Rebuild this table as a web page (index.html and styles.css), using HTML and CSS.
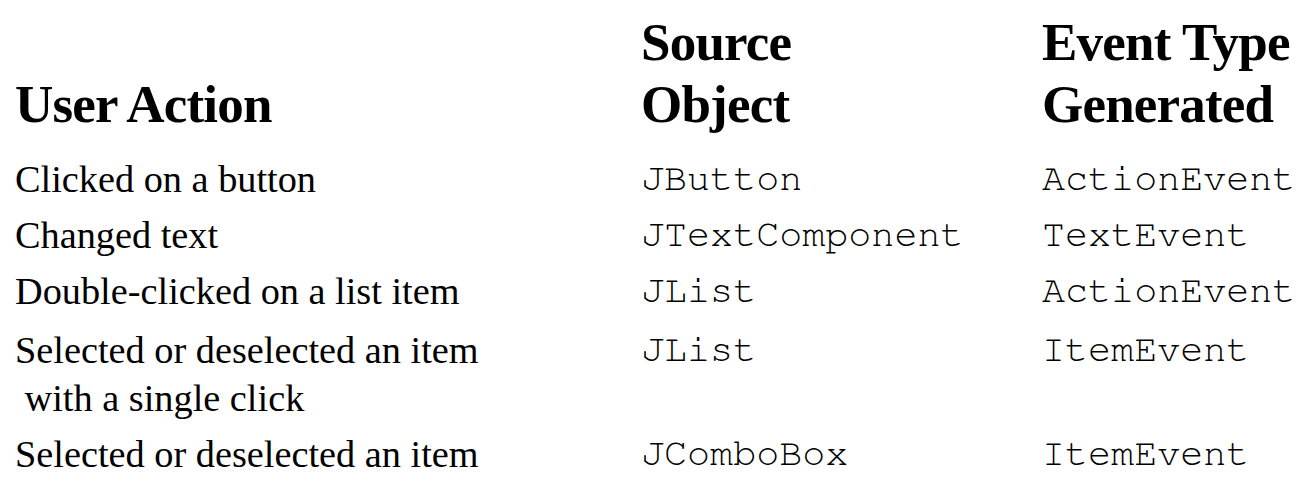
FILE: index.html
```html
<!DOCTYPE html>
<html>
<head>
<meta charset="utf-8">
<link rel="stylesheet" href="styles.css">
</head>
<body>
<table class="events">
  <colgroup>
    <col class="c-action">
    <col class="c-source">
    <col class="c-type">
  </colgroup>
  <thead>
    <tr>
      <th>User Action</th>
      <th>Source<br>Object</th>
      <th>Event Type<br>Generated</th>
    </tr>
  </thead>
  <tbody>
    <tr>
      <td>Clicked on a button</td>
      <td class="code">JButton</td>
      <td class="code">ActionEvent</td>
    </tr>
    <tr>
      <td>Changed text</td>
      <td class="code">JTextComponent</td>
      <td class="code">TextEvent</td>
    </tr>
    <tr>
      <td>Double-clicked on a list item</td>
      <td class="code">JList</td>
      <td class="code">ActionEvent</td>
    </tr>
    <tr class="gap">
      <td>Selected or deselected an item<br>&nbsp;with a single click</td>
      <td class="code">JList</td>
      <td class="code">ItemEvent</td>
    </tr>
    <tr>
      <td>Selected or deselected an item</td>
      <td class="code">JComboBox</td>
      <td class="code">ItemEvent</td>
    </tr>
  </tbody>
</table>
</body>
</html>
```

FILE: styles.css
```css
html, body {
  margin: 0;
  padding: 0;
  background: #ffffff;
  color: #000000;
}

body {
  padding: 11px 0 0 15px;
  font-family: "Liberation Serif", "Times New Roman", serif;
}

.events {
  border-collapse: collapse;
  table-layout: fixed;
  width: 1290px;
}

.c-action { width: 626px; }
.c-source { width: 401px; }
.c-type { width: 263px; }

.events th {
  padding: 0 0 16px 0;
  font-size: 53px;
  line-height: 62px;
  font-weight: bold;
  letter-spacing: -0.8px;
  text-align: left;
  vertical-align: bottom;
  white-space: nowrap;
}

.events td {
  padding: 4px 0;
  font-size: 38.3px;
  line-height: 48px;
  vertical-align: top;
  white-space: nowrap;
}

.events tr.gap td {
  padding-top: 7px;
}

.events td.code {
  font-family: "FreeMono", "Nimbus Mono PS", "Nimbus Mono L", "Courier New", "Liberation Mono", monospace;
  font-size: 38.4px;
  padding-left: 0;
}
```
